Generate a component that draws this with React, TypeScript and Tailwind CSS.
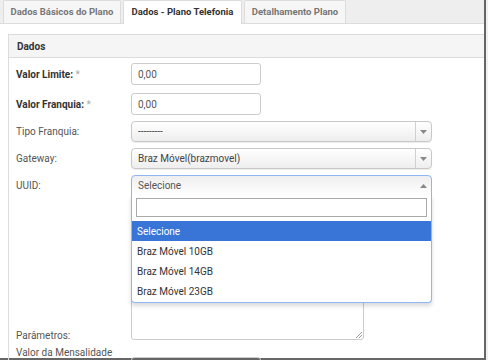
import React from "react";

const F = { fontFamily: "Roboto, 'Liberation Sans', sans-serif" };

function Caret({ up = false }: { up?: boolean }) {
  return (
    <svg width="7" height="4" viewBox="0 0 7 4">
      {up ? <path d="M0 4 L3.5 0 L7 4 Z" fill="#888" /> : <path d="M0 0 L7 0 L3.5 4 Z" fill="#888" />}
    </svg>
  );
}

function Select({ value }: { value: string }) {
  return (
    <div className="w-[301px] h-[21px] flex items-stretch rounded-[4px] border border-[#c8c8c8] bg-gradient-to-b from-white to-[#eeeeee] shadow-[0_1px_1px_rgba(0,0,0,0.08)]">
      <div className="flex-1 flex items-center pl-[6px] text-[10px] text-[#444]">{value}</div>
      <div className="w-[16px] border-l border-[#d0d0d0] flex items-center justify-center">
        <Caret />
      </div>
    </div>
  );
}

export default function App() {
  return (
    <div className="w-[488px] h-[360px] overflow-hidden bg-white flex" style={F}>
      <div className="w-[484px] h-[360px] flex flex-col border-b-2 border-[#666]">
        {/* tabs */}
        <div className="h-[25px] bg-[#eeeeee] border-b border-[#dcdcdc] flex items-end pl-[3px] gap-[2px]">
          <div className="h-[23px] flex items-center justify-center whitespace-nowrap bg-[#f6f6f6] border border-b-0 border-[#dcdcdc] rounded-t-[2px] text-[9.5px] font-bold text-[#777] w-[118px]">
            Dados Básicos do Plano
          </div>
          <div className="h-[24px] -mb-px flex items-center justify-center whitespace-nowrap bg-white border border-b-0 border-[#dcdcdc] rounded-t-[2px] text-[9.5px] font-bold text-[#333] w-[119px]">
            Dados - Plano Telefonia
          </div>
          <div className="h-[23px] flex items-center justify-center whitespace-nowrap bg-[#f6f6f6] border border-b-0 border-[#dcdcdc] rounded-t-[2px] text-[9.5px] font-bold text-[#777] w-[102px]">
            Detalhamento Plano
          </div>
        </div>
        {/* content */}
        <div className="flex-1 pt-[10px] pl-[8px]">
          <div className="h-full border-l border-t border-[#dcdcdc] flex flex-col">
            <div className="h-[23px] bg-[#f5f5f5] border-b border-[#dcdcdc] flex items-center pl-[8px] text-[10px] font-bold text-[#333]">
              Dados
            </div>
            <div className="relative flex-1 pl-[7px] pt-[5px] flex flex-col">
              <div className="flex items-center h-[22px]">
                <div className="w-[115px] text-[10px] font-bold text-[#333]">
                  Valor Limite: <span className="text-[#aaa] font-normal">*</span>
                </div>
                <div className="w-[130px] h-[22px] border border-[#ccc] rounded-[3px] flex items-center pl-[6px] text-[10px] text-[#555]">0,00</div>
              </div>
              <div className="flex items-center h-[22px] mt-[8px]">
                <div className="w-[115px] text-[10px] font-bold text-[#333]">
                  Valor Franquia: <span className="text-[#aaa] font-normal">*</span>
                </div>
                <div className="w-[130px] h-[22px] border border-[#ccc] rounded-[3px] flex items-center pl-[6px] text-[10px] text-[#555]">0,00</div>
              </div>
              <div className="flex items-center h-[21px] mt-[6px]">
                <div className="w-[115px] text-[10px] text-[#555]">Tipo Franquia:</div>
                <Select value="---------" />
              </div>
              <div className="flex items-center h-[21px] mt-[6px]">
                <div className="w-[115px] text-[10px] text-[#555]">Gateway:</div>
                <Select value="Braz Móvel(brazmovel)" />
              </div>
              <div className="flex items-center h-[21px] mt-[6px]">
                <div className="w-[115px] text-[10px] text-[#555]">UUID:</div>
                <div className="relative">
                  <div className="w-[301px] h-[21px] flex items-center rounded-t-[4px] border border-[#8fb5f5] bg-gradient-to-b from-[#eeeeee] to-white">
                    <div className="flex-1 pl-[6px] text-[10px] text-[#555]">Selecione</div>
                    <div className="w-[16px] flex items-center justify-center">
                      <Caret up />
                    </div>
                  </div>
                  <div className="absolute left-0 top-[20px] w-[301px] z-10 bg-white border border-t-0 border-[#8fb5f5] rounded-b-[4px] shadow-[0_3px_4px_rgba(0,0,0,0.15)] pb-[1px]">
                    <div className="px-[4px] pt-[3px] pb-[4px]">
                      <div className="h-[19px] border border-[#aaa] bg-white" />
                    </div>
                    <div className="h-[20px] bg-[#3875d7] text-white text-[10px] flex items-center pl-[5px]">Selecione</div>
                    <div className="h-[20px] text-[#333] text-[10px] flex items-center pl-[5px]">Braz Móvel 10GB</div>
                    <div className="h-[20px] text-[#333] text-[10px] flex items-center pl-[5px]">Braz Móvel 14GB</div>
                    <div className="h-[20px] text-[#333] text-[10px] flex items-center pl-[5px]">Braz Móvel 23GB</div>
                  </div>
                </div>
              </div>
              <div className="flex items-end mt-[9px]">
                <div className="w-[115px] text-[10px] text-[#555] -mb-[3px]">Parâmetros:</div>
                <div className="relative w-[233px] h-[135px] border border-[#ccc] rounded-[3px]">
                  <svg className="absolute right-[1px] bottom-[1px]" width="7" height="7" viewBox="0 0 7 7">
                    <path d="M7 1 L1 7 M7 4 L4 7" stroke="#999" strokeWidth="1" />
                  </svg>
                </div>
              </div>
              <div className="flex items-start mt-[5px]">
                <div className="w-[115px] text-[10px] text-[#555] whitespace-nowrap">Valor da Mensalidade</div>
                <div className="w-[130px] h-[22px] border border-[#ccc] rounded-[3px] mt-[12px]" />
              </div>
            </div>
          </div>
        </div>
      </div>
      <div className="w-[2px] h-full bg-[#666]" />
      <div className="w-[2px] h-full bg-[#f0f0f0]" />
    </div>
  );
}
